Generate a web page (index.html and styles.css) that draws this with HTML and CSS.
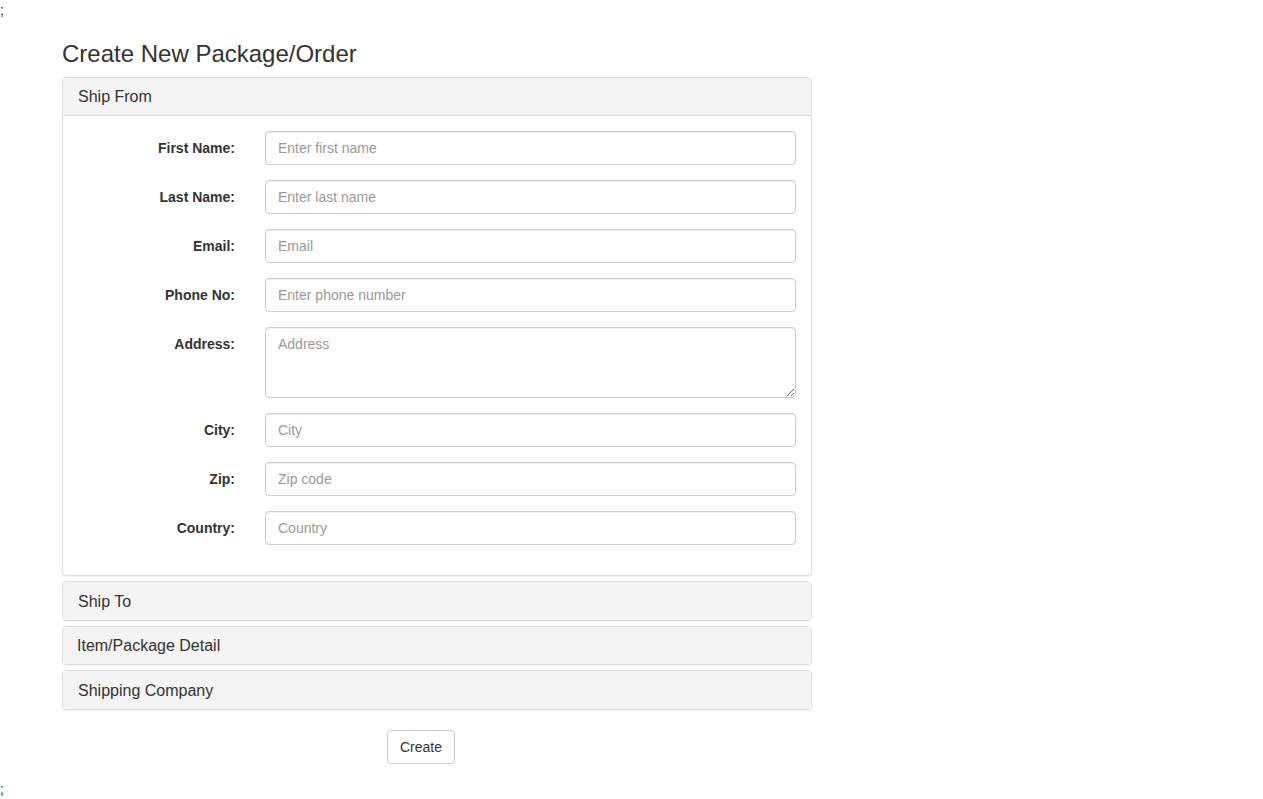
FILE: index.html
```html
<!DOCTYPE html>
<html>
<head>
<meta charset="utf-8">
<title>Create New Package/Order</title>
<link rel="stylesheet" href="styles.css">
</head>
<body>
<div class="semi">;</div>
<div class="container">
  <h3 class="page-title">Create New Package/Order</h3>
  <form class="order-form">
    <div class="panel-group">
      <div class="panel">
        <div class="panel-heading open"><span class="panel-title">Ship From</span></div>
        <div class="panel-body">
          <div class="form-row">
            <label class="control-label">First Name:</label>
            <div class="control"><input class="form-control" type="text" placeholder="Enter first name"></div>
          </div>
          <div class="form-row">
            <label class="control-label">Last Name:</label>
            <div class="control"><input class="form-control" type="text" placeholder="Enter last name"></div>
          </div>
          <div class="form-row">
            <label class="control-label">Email:</label>
            <div class="control"><input class="form-control" type="text" placeholder="Email"></div>
          </div>
          <div class="form-row">
            <label class="control-label">Phone No:</label>
            <div class="control"><input class="form-control" type="text" placeholder="Enter phone number"></div>
          </div>
          <div class="form-row">
            <label class="control-label">Address:</label>
            <div class="control"><textarea class="form-control textarea" placeholder="Address"></textarea></div>
          </div>
          <div class="form-row">
            <label class="control-label">City:</label>
            <div class="control"><input class="form-control" type="text" placeholder="City"></div>
          </div>
          <div class="form-row">
            <label class="control-label">Zip:</label>
            <div class="control"><input class="form-control" type="text" placeholder="Zip code"></div>
          </div>
          <div class="form-row">
            <label class="control-label">Country:</label>
            <div class="control"><input class="form-control" type="text" placeholder="Country"></div>
          </div>
        </div>
      </div>
      <div class="panel">
        <div class="panel-heading"><span class="panel-title">Ship To</span></div>
      </div>
      <div class="panel">
        <div class="panel-heading alt"><span class="panel-title shift">Item/Package Detail</span></div>
      </div>
      <div class="panel">
        <div class="panel-heading"><span class="panel-title">Shipping Company</span></div>
      </div>
    </div>
    <div class="actions">
      <button type="button" class="btn">Create</button>
    </div>
  </form>
</div>
<div class="semi">;</div>
</body>
</html>
```
FILE: styles.css
```css
* { box-sizing: border-box; }
html, body { margin: 0; padding: 0; }
body {
  font-family: "Liberation Sans", Arial, Helvetica, sans-serif;
  font-size: 14px;
  line-height: 20px;
  color: #333;
  background: #fff;
}
.semi { height: 20px; line-height: 20px; }
.container {
  width: 1170px;
  margin: 0 auto;
  padding: 0 15px 0 15.5px;
}
.page-title {
  font-size: 24px;
  font-weight: 500;
  line-height: 26.4px;
  margin: 21px 0 10px;
}
.order-form { width: 750px; }
.panel-group { margin-bottom: 20px; }
.panel {
  border: 1px solid #ddd;
  border-radius: 4px;
  background: #fff;
  box-shadow: 0 1px 1px rgba(0,0,0,.05);
}
.panel + .panel { margin-top: 5px; }
.panel-heading {
  background: #f4f4f4;
  padding: 11px 15px 9px;
  border-radius: 3px 3px 0 0;
}
.panel-heading.open { padding: 10px 15px 9px; }
.panel-heading.alt { padding: 10px 15px; }
.panel-title {
  display: block;
  font-size: 16px;
  line-height: 17.6px;
  color: #333;
}
.panel-title.shift { margin-left: -1px; }
.panel-body {
  border-top: 1px solid #ddd;
  padding: 15px;
}
.form-row {
  display: flex;
  margin: 0 -15px 15px;
}
.control-label {
  width: 187px;
  flex: none;
  padding: 7px 15px 0;
  text-align: right;
  font-weight: bold;
}
.control {
  flex: 1;
  padding: 0 15px;
}
.form-control {
  display: block;
  width: 100%;
  height: 34px;
  padding: 6px 12px;
  font-family: inherit;
  font-size: 14px;
  line-height: 20px;
  color: #555;
  background: #fff;
  border: 1px solid #ccc;
  border-radius: 4px;
  box-shadow: inset 0 1px 1px rgba(0,0,0,.075);
  margin: 0;
}
.form-control::placeholder { color: #999; opacity: 1; }
.textarea { height: 71px; resize: vertical; }
.actions {
  padding-left: 325px;
  margin-bottom: 15px;
}
.btn {
  display: inline-block;
  height: 34px;
  padding: 6px 12px;
  font-family: inherit;
  font-size: 14px;
  line-height: 20px;
  color: #333;
  background: #fff;
  border: 1px solid #ccc;
  border-radius: 4px;
  cursor: pointer;
}
```
